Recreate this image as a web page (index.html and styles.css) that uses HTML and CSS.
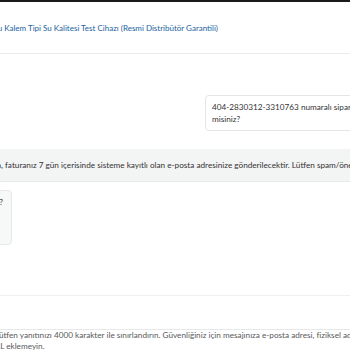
FILE: index.html
```html
<!DOCTYPE html>
<html lang="tr">
<head>
  <meta charset="UTF-8">
  <title>Satıcıyla İletişim</title>
  <link rel="stylesheet" href="styles.css">
</head>
<body>
  <div class="topbar"></div>

  <div class="header">
    <div class="product">
      <a href="#">Xiaomi Mi TDS Su Ölçer Dijital Okuyucu Kalem Tipi Su Kalitesi Test Cihazı (Resmi Distribütör Garantili)</a>
    </div>
  </div>

  <div class="thread">
    <div class="msg-out">404-2830312-3310763 numaralı siparişim için fatura gönderebilir misiniz?</div>

    <div class="msg-band">Merhaba, faturanız 7 gün içerisinde sisteme kayıtlı olan e-posta adresinize gönderilecektir. Lütfen spam/önemsiz klasörünüzü de kontrol ediniz.</div>

    <div class="row-in">
      <div class="msg-in">Size başka nasıl yardımcı olabiliriz?</div>
    </div>
  </div>

  <div class="reply"></div>

  <p class="note">Lütfen yanıtınızı 4000 karakter ile sınırlandırın. Güvenliğiniz için mesajınıza e-posta adresi, fiziksel adres, telefon numarası veya URL eklemeyin.</p>
</body>
</html>
```

FILE: styles.css
```css
body {
  margin: 0;
  width: 350px;
  overflow: hidden;
  font-family: Lato, "Liberation Sans", sans-serif;
  font-size: 8.2px;
  color: #0f1111;
  background: #fff;
}
.topbar {
  height: 2px;
  background: #1a1a1a;
}
.header {
  height: 51px;
  display: flex;
  align-items: center;
  border-bottom: 1px solid #e9ebeb;
}
.product {
  width: 218px;
  display: flex;
  justify-content: flex-end;
  white-space: nowrap;
}
.product a {
  font-size: 8px;
  color: #2162a1;
  text-decoration: none;
}
.thread {
  padding-top: 41px;
}
.msg-out {
  margin-left: 205px;
  width: 245px;
  padding: 5px 6px;
  line-height: 12px;
  color: #333;
  border: 1px solid #e3e6e6;
  border-radius: 4px;
  background: #fff;
}
.msg-band {
  margin-top: 18px;
  margin-left: -31px;
  height: 32px;
  line-height: 32px;
  white-space: nowrap;
  color: #333;
  background: #f3f4f4;
  border-bottom: 1px solid #e7e9e9;
}
.row-in {
  width: 12px;
  margin-top: 8px;
  display: flex;
  justify-content: flex-end;
}
.msg-in {
  flex-shrink: 0;
  height: 43px;
  padding: 5px 8px 5px 6px;
  white-space: nowrap;
  line-height: 12px;
  color: #333;
  background: #f7f8f8;
  border: 1px solid #e7e9e9;
  border-radius: 4px;
}
.reply {
  margin-top: 50px;
  height: 33px;
  border-top: 1px solid #eef0f0;
  border-bottom: 1px solid #e7e9e9;
}
.note {
  margin: 0 0 0 -11px;
  text-indent: 6px;
  width: 462px;
  line-height: 11px;
  color: #565959;
}
```
